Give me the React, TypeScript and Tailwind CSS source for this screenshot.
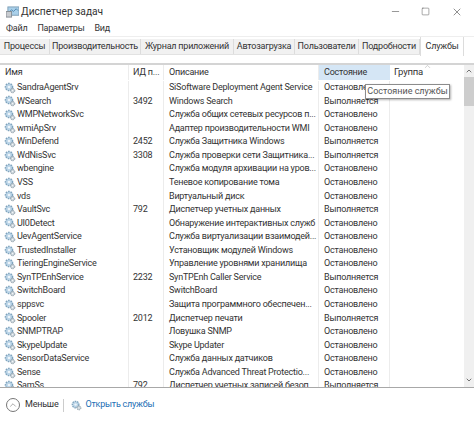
import { ChevronUp, ChevronDown, Minus, Square, X } from "lucide-react"

const services = [
  ["SandraAgentSrv", "", "SiSoftware Deployment Agent Service", "Остановлено"],
  ["WSearch", "3492", "Windows Search", "Выполняется"],
  ["WMPNetworkSvc", "", "Служба общих сетевых ресурсов п...", "Остановлено"],
  ["wmiApSrv", "", "Адаптер производительности WMI", "Остановлено"],
  ["WinDefend", "2452", "Служба Защитника Windows", "Выполняется"],
  ["WdNisSvc", "3308", "Служба проверки сети Защитника...", "Выполняется"],
  ["wbengine", "", "Служба модуля архивации на уров...", "Остановлено"],
  ["VSS", "", "Теневое копирование тома", "Остановлено"],
  ["vds", "", "Виртуальный диск", "Остановлено"],
  ["VaultSvc", "792", "Диспетчер учетных данных", "Выполняется"],
  ["UI0Detect", "", "Обнаружение интерактивных служб", "Остановлено"],
  ["UevAgentService", "", "Служба виртуализации взаимодей...", "Остановлено"],
  ["TrustedInstaller", "", "Установщик модулей Windows", "Остановлено"],
  ["TieringEngineService", "", "Управление уровнями хранилища", "Остановлено"],
  ["SynTPEnhService", "2232", "SynTPEnh Caller Service", "Выполняется"],
  ["SwitchBoard", "", "SwitchBoard", "Остановлено"],
  ["sppsvc", "", "Защита программного обеспечен...", "Остановлено"],
  ["Spooler", "2012", "Диспетчер печати", "Выполняется"],
  ["SNMPTRAP", "", "Ловушка SNMP", "Остановлено"],
  ["SkypeUpdate", "", "Skype Updater", "Остановлено"],
  ["SensorDataService", "", "Служба данных датчиков", "Остановлено"],
  ["Sense", "", "Служба Advanced Threat Protectio...", "Остановлено"],
  ["SamSs", "792", "Диспетчер учетных записей безоп...", "Выполняется"],
]

const tabs = [
  { label: "Процессы", width: "w-[50px]" },
  { label: "Производительность", width: "w-[91px]" },
  { label: "Журнал приложений", width: "w-[93px]" },
  { label: "Автозагрузка", width: "w-[61px]" },
  { label: "Пользователи", width: "w-[64px]" },
  { label: "Подробности", width: "w-[61px]" },
]

function GearIcon({ size = 12 }: { size?: number }) {
  return (
    <svg width={size} height={size} viewBox="0 0 12 12" className="shrink-0">
      <circle cx="5" cy="5" r="3.6" fill="#b9d3e6" stroke="#7fa3bd" strokeWidth="1.4" strokeDasharray="1.6 1" />
      <circle cx="5" cy="5" r="1.3" fill="#eef5fa" />
      <circle cx="8.6" cy="8.6" r="2.2" fill="#c4cfd6" stroke="#8b9aa5" strokeWidth="1" strokeDasharray="1.2 .8" />
      <circle cx="8.6" cy="8.6" r=".8" fill="#f2f5f7" />
    </svg>
  )
}

export default function App() {
  return (
    <div className="w-[474px] h-[422px] bg-white flex flex-col overflow-hidden text-[9px] tracking-[-0.22px] text-[#333] font-['Roboto','Liberation_Sans',sans-serif]">
      <div className="h-[23px] flex items-center pl-[6px] shrink-0">
        <svg width="13" height="12" viewBox="0 0 14 13" className="shrink-0">
          <rect x="2" y="1" width="12" height="9" fill="#a9d0ea" stroke="#7d9db5" />
          <path d="M3 7l3-3 2 2 3-3 2 2" fill="none" stroke="#4f86ad" />
          <rect x="0" y="6" width="6" height="6" fill="#c9ccd0" stroke="#858c93" />
        </svg>
        <span className="ml-[2px] text-[10.2px] tracking-normal">Диспетчер задач</span>
        <div className="ml-auto flex items-center text-[#444]">
          <Minus size={11} strokeWidth={1.2} className="mr-[20px]" />
          <Square size={9} strokeWidth={1.2} className="mr-[21px]" />
          <X size={12} strokeWidth={1.2} className="mr-[11px]" />
        </div>
      </div>
      <div className="h-[12px] flex items-center gap-[10px] pl-[6px] shrink-0">
        <span>Файл</span>
        <span>Параметры</span>
        <span>Вид</span>
      </div>
      <div className="h-[20px] mt-[1px] flex items-end shrink-0 border-t border-[#eeeeee]">
        <div className="flex items-stretch h-[16px] mb-[1px] bg-[#f1f1f1] border-b border-[#e2e2e2]">
          {tabs.map((t) => (
            <span key={t.label} className={`${t.width} flex items-center justify-center border-r border-[#dcdcdc] whitespace-nowrap`}>
              {t.label}
            </span>
          ))}
        </div>
        <span className="w-[44px] h-[19px] bg-white border-x border-[#dcdcdc] flex items-center justify-center whitespace-nowrap">Службы</span>
      </div>
      <div className="h-[9px] shrink-0 border-b-2 border-[#d4d4d4]" />
      <div className="relative flex-1 flex min-h-0">
        <div className="flex-1 min-w-0 flex flex-col">
          <div className="h-[15px] mb-[1px] flex shrink-0 items-stretch whitespace-nowrap">
            <div className="w-[129px] pl-[5px] flex items-center border-r border-[#ececec]">Имя</div>
            <div className="w-[35px] pl-[4px] flex items-center border-r border-[#ececec]">ИД п...</div>
            <div className="w-[155px] pl-[5px] flex items-center border-r border-[#ececec]">Описание</div>
            <div className="w-[71px] pl-[5px] flex items-center bg-[#d5e6f5]">Состояние</div>
            <div className="flex-1 pl-[4px] flex items-center text-[9.5px]">Группа</div>
          </div>
          <div className="flex-1 overflow-hidden">
            {services.map(([name, pid, desc, state]) => (
              <div key={name} className="h-[13.57px] flex items-center whitespace-nowrap">
                <div className="w-[129px] h-full pl-[4px] flex items-center gap-[1px] border-r border-[#ececec]">
                  <GearIcon />
                  <span>{name}</span>
                </div>
                <div className="w-[35px] h-full pl-[4px] flex items-center border-r border-[#ececec]">{pid}</div>
                <div className="w-[155px] h-full pl-[5px] flex items-center border-r border-[#ececec]">{desc}</div>
                <div className="w-[71px] h-full pl-[5px] flex items-center border-r border-[#ececec]">{state}</div>
              </div>
            ))}
          </div>
        </div>
        <div className="w-[10px] shrink-0 bg-[#f0f0f0] flex flex-col items-center justify-between pb-[3px]">
          <div className="w-full flex flex-col items-center">
            <ChevronUp size={8} strokeWidth={2} className="my-[2px]" />
            <div className="w-full h-[29px] bg-[#cdcdcd]" />
          </div>
          <ChevronDown size={8} strokeWidth={2} />
        </div>
        <ChevronUp size={9} strokeWidth={1} className="absolute left-[423px] -top-[3px] text-[#888]" />
        <div className="absolute left-[365px] top-[19px] h-[15px] w-[85px] flex items-center justify-center bg-white border border-[#8c8c8c] shadow-[1px_1px_2px_rgba(0,0,0,0.3)] text-[#555] tracking-normal whitespace-nowrap">
          Состояние службы
        </div>
      </div>
      <div className="h-[35px] shrink-0 border-t border-[#a8a8a8] flex items-center pl-[6px]">
        <div className="w-[14px] h-[14px] rounded-full border border-[#777] flex items-center justify-center">
          <ChevronUp size={10} strokeWidth={1} />
        </div>
        <span className="ml-[5px]">Меньше</span>
        <div className="ml-[5px] w-px h-[13px] bg-[#ccc]" />
        <div className="ml-[7px]"><GearIcon size={11} /></div>
        <span className="ml-[3px] text-[#1c6fb5]">Открыть службы</span>
      </div>
    </div>
  )
}
